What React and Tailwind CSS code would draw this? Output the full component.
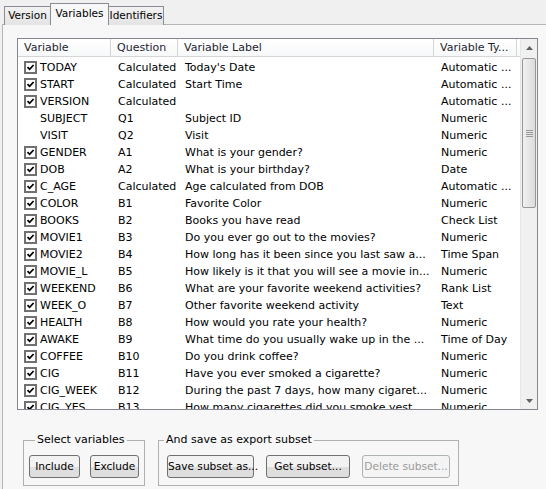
import React from 'react'

const rows = [
  { name: 'TODAY', q: 'Calculated', label: "Today's Date", type: 'Automatic ...', check: true },
  { name: 'START', q: 'Calculated', label: 'Start Time', type: 'Automatic ...', check: true },
  { name: 'VERSION', q: 'Calculated', label: '', type: 'Automatic ...', check: true },
  { name: 'SUBJECT', q: 'Q1', label: 'Subject ID', type: 'Numeric', check: false },
  { name: 'VISIT', q: 'Q2', label: 'Visit', type: 'Numeric', check: false },
  { name: 'GENDER', q: 'A1', label: 'What is your gender?', type: 'Numeric', check: true },
  { name: 'DOB', q: 'A2', label: 'What is your birthday?', type: 'Date', check: true },
  { name: 'C_AGE', q: 'Calculated', label: 'Age calculated from DOB', type: 'Automatic ...', check: true },
  { name: 'COLOR', q: 'B1', label: 'Favorite Color', type: 'Numeric', check: true },
  { name: 'BOOKS', q: 'B2', label: 'Books you have read', type: 'Check List', check: true },
  { name: 'MOVIE1', q: 'B3', label: 'Do you ever go out to the movies?', type: 'Numeric', check: true },
  { name: 'MOVIE2', q: 'B4', label: 'How long has it been since you last saw a...', type: 'Time Span', check: true },
  { name: 'MOVIE_L', q: 'B5', label: 'How likely is it that you will see a movie in...', type: 'Numeric', check: true },
  { name: 'WEEKEND', q: 'B6', label: 'What are your favorite weekend activities?', type: 'Rank List', check: true },
  { name: 'WEEK_O', q: 'B7', label: 'Other favorite weekend activity', type: 'Text', check: true },
  { name: 'HEALTH', q: 'B8', label: 'How would you rate your health?', type: 'Numeric', check: true },
  { name: 'AWAKE', q: 'B9', label: 'What time do you usually wake up in the ...', type: 'Time of Day', check: true },
  { name: 'COFFEE', q: 'B10', label: 'Do you drink coffee?', type: 'Numeric', check: true },
  { name: 'CIG', q: 'B11', label: 'Have you ever smoked a cigarette?', type: 'Numeric', check: true },
  { name: 'CIG_WEEK', q: 'B12', label: 'During the past 7 days, how many cigaret...', type: 'Numeric', check: true },
  { name: 'CIG_YES', q: 'B13', label: 'How many cigarettes did you smoke yest...', type: 'Numeric', check: true },
]

const CheckBox = () => (
  <span className="w-[13px] h-[13px] shrink-0 border-2 border-[#717171] bg-white flex items-center justify-center">
    <svg width="9" height="9" viewBox="0 0 9 9">
      <path d="M1.5 4.2 L3.6 6.3 L7.6 2" fill="none" stroke="#000" strokeWidth="1.8" />
    </svg>
  </span>
)

const WinButton = ({ children, w, disabled }) => (
  <button
    className={`${w} h-[23px] rounded-[3px] border whitespace-nowrap leading-none text-[10.6px] ${
      disabled
        ? 'border-[#adb2b5] bg-[#f4f4f4] text-[#9a9a9a]'
        : 'border-[#707070] bg-gradient-to-b from-[#f2f2f2] from-50% to-[#dedede] to-50% text-black'
    }`}
  >
    {children}
  </button>
)

const App = () => {
  return (
    <div className="w-[546px] h-[489px] overflow-hidden bg-[#f0f0f0] pl-[2px] font-['DejaVu_Sans',Tahoma,sans-serif] text-[11px] text-black">
      {/* tabs */}
      <div className="flex items-end h-[24px] pl-[2px] text-[10.5px] whitespace-nowrap">
        <div className="h-[19px] w-[47px] border border-b-0 border-[#898c95] bg-gradient-to-b from-[#f2f2f2] to-[#e3e3e3] flex items-center justify-center -mb-px">
          Version
        </div>
        <div className="h-[22px] w-[59px] border border-b-0 border-[#898c95] bg-[#f7f7f7] flex items-center justify-center -mx-px relative z-10 -mb-px pb-[2px]">
          Variables
        </div>
        <div className="h-[19px] w-[56px] border border-b-0 border-[#898c95] bg-gradient-to-b from-[#f2f2f2] to-[#e3e3e3] flex items-center justify-center -mb-px">
          Identifiers
        </div>
      </div>

      {/* panel */}
      <div className="w-[560px] h-[470px] border border-[#b5b5b5] bg-[#f7f7f7] pl-[14px] pt-[13px]">
        {/* list view */}
        <div className="w-[521px] h-[372px] border border-[#828790] bg-white flex">
          <div className="w-[502px] flex flex-col">
            <div className="h-[18px] flex border-b border-[#d5d5d5] text-[#1e1e2e] bg-gradient-to-b from-white to-[#f7f8f9]">
              <div className="w-[93px] pl-[6px] border-r border-[#d5d5d5] leading-[17px]">Variable</div>
              <div className="w-[67px] pl-[6px] border-r border-[#d5d5d5] leading-[17px]">Question</div>
              <div className="w-[256px] pl-[6px] border-r border-[#d5d5d5] leading-[17px]">Variable Label</div>
              <div className="w-[83px] pl-[6px] border-r border-[#d5d5d5] leading-[17px] whitespace-nowrap overflow-hidden">Variable Ty...</div>
            </div>
            <div className="flex-1 overflow-hidden pt-[2px]">
              {rows.map((r) => (
                <div key={r.name} className="h-[17px] flex items-center leading-[17px] whitespace-nowrap">
                  <div className="w-[93px] pl-[6px] flex items-center gap-[3px]">
                    {r.check ? <CheckBox /> : <span className="w-[13px] h-[13px] shrink-0" />}
                    <span>{r.name}</span>
                  </div>
                  <div className="w-[67px] pl-[7px]">{r.q}</div>
                  <div className="w-[256px] pl-[7px] overflow-hidden">{r.label}</div>
                  <div className="w-[83px] pl-[7px] overflow-hidden">{r.type}</div>
                </div>
              ))}
            </div>
          </div>

          {/* scrollbar */}
          <div className="w-[17px] bg-[#f0f0f0] border-l border-[#e6e6e6] flex flex-col">
            <div className="h-[17px] flex items-center justify-center">
              <svg width="7" height="4" viewBox="0 0 7 4"><path d="M0 4 L3.5 0 L7 4 Z" fill="#606060" /></svg>
            </div>
            <div className="flex-1 pt-[2px] px-[1px]">
              <div className="h-[150px] rounded-[2px] border border-[#979797] bg-gradient-to-r from-[#f0f0f0] to-[#dcdcdc] flex items-center justify-center">
                <div className="flex flex-col gap-[1px]">
                  <div className="w-[7px] h-px bg-[#9a9a9a]" />
                  <div className="w-[7px] h-px bg-[#9a9a9a]" />
                  <div className="w-[7px] h-px bg-[#9a9a9a]" />
                  <div className="w-[7px] h-px bg-[#9a9a9a]" />
                </div>
              </div>
            </div>
            <div className="h-[17px] flex items-center justify-center">
              <svg width="7" height="4" viewBox="0 0 7 4"><path d="M0 0 L3.5 4 L7 0 Z" fill="#606060" /></svg>
            </div>
          </div>
        </div>

        {/* group boxes */}
        <div className="flex gap-[13px] pl-[6px] mt-[23px]">
          <fieldset className="w-[121px] border border-[#b0b0b0] px-[5px] pt-[8px] pb-[7px]">
            <legend className="ml-[6px] px-[2px] leading-[14px]">Select variables</legend>
            <div className="flex gap-[10px]">
              <WinButton w="w-[51px]">Include</WinButton>
              <WinButton w="w-[49px]">Exclude</WinButton>
            </div>
          </fieldset>
          <fieldset className="w-[301px] border border-[#b0b0b0] pl-[8px] pt-[8px] pb-[7px]">
            <legend className="ml-[-3px] px-[2px] leading-[14px]">And save as export subset</legend>
            <div className="flex gap-[12px]">
              <WinButton w="w-[87px]">Save subset as...</WinButton>
              <WinButton w="w-[84px]">Get subset...</WinButton>
              <WinButton w="w-[88px]" disabled>Delete subset...</WinButton>
            </div>
          </fieldset>
        </div>
      </div>
    </div>
  )
}

export default App
